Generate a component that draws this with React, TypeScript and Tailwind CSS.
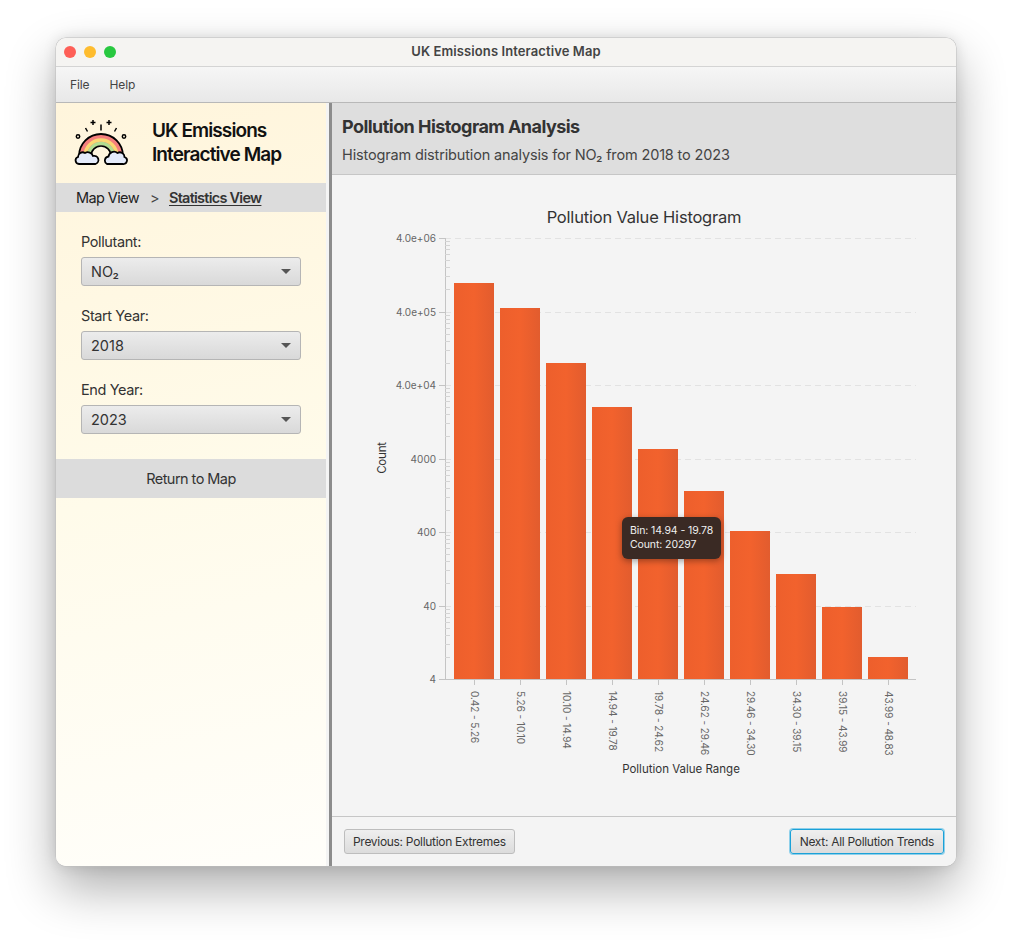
const FONT = "font-['Inter','Liberation_Sans',sans-serif]";

const bars = [
  { label: "0.42 - 5.26", top: 283 },
  { label: "5.26 - 10.10", top: 308 },
  { label: "10.10 - 14.94", top: 363 },
  { label: "14.94 - 19.78", top: 407 },
  { label: "19.78 - 24.62", top: 449 },
  { label: "24.62 - 29.46", top: 491 },
  { label: "29.46 - 34.30", top: 531 },
  { label: "34.30 - 39.15", top: 574 },
  { label: "39.15 - 43.99", top: 607 },
  { label: "43.99 - 48.83", top: 657 },
];

const majors = [
  { y: 238, label: "4.0e+06" },
  { y: 312, label: "4.0e+05" },
  { y: 385, label: "4.0e+04" },
  { y: 459, label: "4000" },
  { y: 532, label: "400" },
  { y: 606, label: "40" },
];

const DECADE = 73.5;
const minorSteps = [2, 3, 4, 5, 6, 7, 8, 9].map((m) => Math.log10(m) * DECADE);

function RainbowLogo() {
  return (
    <svg width="54" height="50" viewBox="74 119 54 50" className="shrink-0">
      <path d="M79 157 A22 22 0 0 1 123 157 L113 157 A12 12 0 0 0 89 157 Z" fill="#f47f7d" stroke="#000" strokeWidth="1.800" />
      <path d="M85 157 A16 16 0 0 1 117 157" fill="none" stroke="#fbd672" strokeWidth="3.400" />
      <path d="M88.500 157 A12.500 12.500 0 0 1 113.500 157" fill="none" stroke="#b2dd90" strokeWidth="3.400" />
      <path d="M91 157 A10 10 0 0 1 111 157" fill="none" stroke="#000" strokeWidth="1.600" />
      <path d="M79 165 A3.600 3.600 0 0 1 78 158 A4.600 4.600 0 0 1 85 154 A5.500 5.500 0 0 1 93 157 A4 4 0 0 1 95.500 165 Z" fill="#e4ebfa" stroke="#000" strokeWidth="1.800" />
      <path d="M107 165 A4 4 0 0 1 108.500 157.500 A5.500 5.500 0 0 1 117.500 154 A4.600 4.600 0 0 1 124.500 158 A3.600 3.600 0 0 1 123 165 Z" fill="#e4ebfa" stroke="#000" strokeWidth="1.800" />
      <g stroke="#000" strokeWidth="1.500" fill="none">
        <path d="M101 125.500v6" />
        <path d="M93 121v5M90.500 123.500h5" />
        <path d="M109 121v5M106.500 123.500h5" />
        <path d="M85.500 129l2 3.500" />
        <path d="M116.500 129l-2 3.500" />
        <circle cx="78" cy="137.500" r="1.700" />
        <circle cx="124" cy="137.500" r="1.700" />
      </g>
    </svg>
  );
}

function ComboBox({ label, value }: { label: string; value: string }) {
  return (
    <div className="flex flex-col gap-[6px]">
      <span className="pt-[1px] text-[14.500px] leading-[18px] tracking-[-0.4px] text-[#333]">{label}</span>
      <div className="flex h-[29px] items-center justify-between rounded-[3px] border border-[#b5b5b5] bg-gradient-to-b from-[#ececec] to-[#d9d9d9] pl-[9px] pr-[9px] text-[14.500px] text-[#333]">
        <span>{value}</span>
        <span className="h-0 w-0 border-x-[5px] border-t-[5px] border-x-transparent border-t-[#555]" />
      </div>
    </div>
  );
}

function Sidebar() {
  return (
    <aside className="flex w-[270px] shrink-0 flex-col bg-[linear-gradient(168deg,#fff5dc_0%,#fffbea_50%,#fffefa_100%)]">
      <div className="flex h-[80px] items-center pl-[18px]">
        <RainbowLogo />
        <h1 className="ml-[24px] text-[19px] font-semibold leading-[24px] tracking-[-0.9px] text-[#111]">
          UK Emissions
          <br />
          Interactive Map
        </h1>
      </div>
      <nav className="flex h-[29px] items-center bg-[#dcdcdc] pl-[20px] text-[14.500px] tracking-[-0.6px] text-[#222]">
        <span>Map View</span>
        <span className="ml-[11px] text-[#444]">&gt;</span>
        <span className="ml-[10px] font-semibold tracking-[-0.75px] text-[#333] underline underline-offset-2">Statistics View</span>
      </nav>
      <div className="flex flex-col gap-[20px] pl-[25px] pr-[25px] pt-[20px]">
        <ComboBox label="Pollutant:" value="NO₂" />
        <ComboBox label="Start Year:" value="2018" />
        <ComboBox label="End Year:" value="2023" />
      </div>
      <button className="mt-[25px] h-[39px] bg-[#dcdcdc] text-[14.500px] tracking-[-0.55px] text-[#333]">Return to Map</button>
    </aside>
  );
}

function Histogram() {
  return (
    <svg width="624" height="641" viewBox="332 175 624 641" className="block">
      <defs>
        <linearGradient id="barFill" x1="0" x2="1" y1="0" y2="0">
          <stop offset="0" stopColor="#ed5f2c" />
          <stop offset="0.5" stopColor="#f2622d" />
          <stop offset="1" stopColor="#e25c2e" />
        </linearGradient>
      </defs>
      <text x="644" y="223" textAnchor="middle" fontSize="16.500" letterSpacing="-0.2" fill="#333">Pollution Value Histogram</text>

      {majors.map((m) => (
        <line key={m.y} x1="445" x2="916" y1={m.y + 0.5} y2={m.y + 0.5} stroke="#e2e2e2" strokeDasharray="6 4" />
      ))}

      {bars.map((b, i) => (
        <rect key={b.label} x={454 + i * 46} y={b.top} width="40" height={679 - b.top} fill="url(#barFill)" />
      ))}

      {/* y axis with log minor ticks */}
      <line x1="445.500" x2="445.500" y1="238" y2="680" stroke="#c4c4c4" />
      {majors.map((m) =>
        minorSteps.map((s) => (
          <line key={`${m.y}-${s}`} x1="445" x2="450" y1={Math.round(m.y + DECADE - s) + 0.5} y2={Math.round(m.y + DECADE - s) + 0.5} stroke="#d4d4d4" />
        ))
      )}
      {majors.map((m) => (
        <g key={m.label}>
          <line x1="439" x2="445" y1={m.y + 0.5} y2={m.y + 0.5} stroke="#c4c4c4" />
          <text x="436" y={m.y + 3.5} textAnchor="end" fontSize="10" fill="#666">{m.label}</text>
        </g>
      ))}
      <line x1="439" x2="445" y1="679.500" y2="679.500" stroke="#c4c4c4" />
      <text x="436" y="683" textAnchor="end" fontSize="10" fill="#666">4</text>
      <text transform="translate(386 458) rotate(-90)" textAnchor="middle" fontSize="11.500" letterSpacing="-0.2" fill="#333">Count</text>

      {/* x axis */}
      <line x1="445" x2="916" y1="679.500" y2="679.500" stroke="#c4c4c4" />
      {bars.map((b, i) => (
        <g key={b.label}>
          <line x1={474.5 + i * 46} x2={474.5 + i * 46} y1="680" y2="685" stroke="#c4c4c4" />
          <text transform={`translate(${470.5 + i * 46} 691) rotate(90)`} fontSize="10" letterSpacing="-0.05" fill="#666">{b.label}</text>
        </g>
      ))}
      <text x="681" y="773" textAnchor="middle" fontSize="11.500" fill="#333">Pollution Value Range</text>
    </svg>
  );
}

function NavButton({ children, focused }: { children: string; focused?: boolean }) {
  return (
    <button
      className={
        focused
          ? "flex h-[25px] items-center rounded-[3px] border border-[#1ba1d8] bg-gradient-to-b from-[#efefef] to-[#dcdcdc] px-[9px] text-[12px] tracking-[-0.3px] text-[#333] shadow-[0_0_0_1px_#8fd0ea]"
          : "flex h-[25px] items-center rounded-[3px] border border-[#bdbdbd] bg-gradient-to-b from-[#efefef] to-[#dcdcdc] px-[8px] text-[12px] tracking-[-0.3px] text-[#333]"
      }
    >
      {children}
    </button>
  );
}

export default function App() {
  return (
    <div className={`${FONT} h-[940px] w-[1012px] overflow-hidden bg-white pl-[56px] pt-[38px]`}>
      <div className="flex h-[828px] w-[900px] flex-col overflow-hidden rounded-[10px] shadow-[0_0_0_0.5px_#bdbdbd,0_22px_50px_rgba(0,0,0,0.32),0_0_14px_rgba(0,0,0,0.12)]">
        <header className="relative flex h-[29px] shrink-0 items-center justify-center border-b border-[#d4d4d4] bg-[#f5f4f2]">
          <div className="absolute left-[8px] top-[8px] flex gap-[8px]">
            <span className="h-3 w-3 rounded-full bg-[#fe5f57]" />
            <span className="h-3 w-3 rounded-full bg-[#febc2e]" />
            <span className="h-3 w-3 rounded-full bg-[#28c840]" />
          </div>
          <span className="text-[13px] font-semibold tracking-[0.1px] text-[#444]">UK Emissions Interactive Map</span>
        </header>
        <div className="flex h-[36px] shrink-0 items-center gap-[20px] border-b border-[#b8b8b8] bg-gradient-to-b from-[#f6f6f6] to-[#e8e8e8] pl-[14px] text-[12px] tracking-[-0.1px] text-[#444]">
          <span>File</span>
          <span>Help</span>
        </div>
        <main className="flex min-h-0 flex-1 bg-[#f4f4f4]">
          <Sidebar />
          <div className="w-[6px] shrink-0 border-l-[3px] border-l-[#f4f4f4] bg-[#8c8c8c]" />
          <section className="flex min-w-0 flex-1 flex-col">
            <div className="h-[72px] shrink-0 border-b border-[#c6c6c6] bg-[#dedede] pl-[10px] pt-[13px]">
              <h2 className="text-[18px] font-bold leading-[22px] tracking-[-0.55px] text-[#333]">Pollution Histogram Analysis</h2>
              <p className="mt-[7px] text-[14.500px] leading-[20px] tracking-[-0.15px] text-[#444]">
                Histogram distribution analysis for NO₂ from 2018 to 2023
              </p>
            </div>
            <div className="relative h-[641px] shrink-0">
              <Histogram />
              <div className="absolute left-[290px] top-[342px] h-[42px] w-[99px] whitespace-nowrap rounded-[6px] bg-[#3a2a24] px-[8px] py-[7px] text-[10.500px] leading-[14px] tracking-[-0.1px] text-[#f0f0f0] shadow-[0_2px_6px_rgba(0,0,0,0.35)]">
                <div>Bin: 14.94 - 19.78</div>
                <div>Count: 20297</div>
              </div>
            </div>
            <footer className="flex flex-1 items-center justify-between border-t border-[#c6c6c6] px-[12px]">
              <NavButton>Previous: Pollution Extremes</NavButton>
              <NavButton focused>Next: All Pollution Trends</NavButton>
            </footer>
          </section>
        </main>
      </div>
    </div>
  );
}
